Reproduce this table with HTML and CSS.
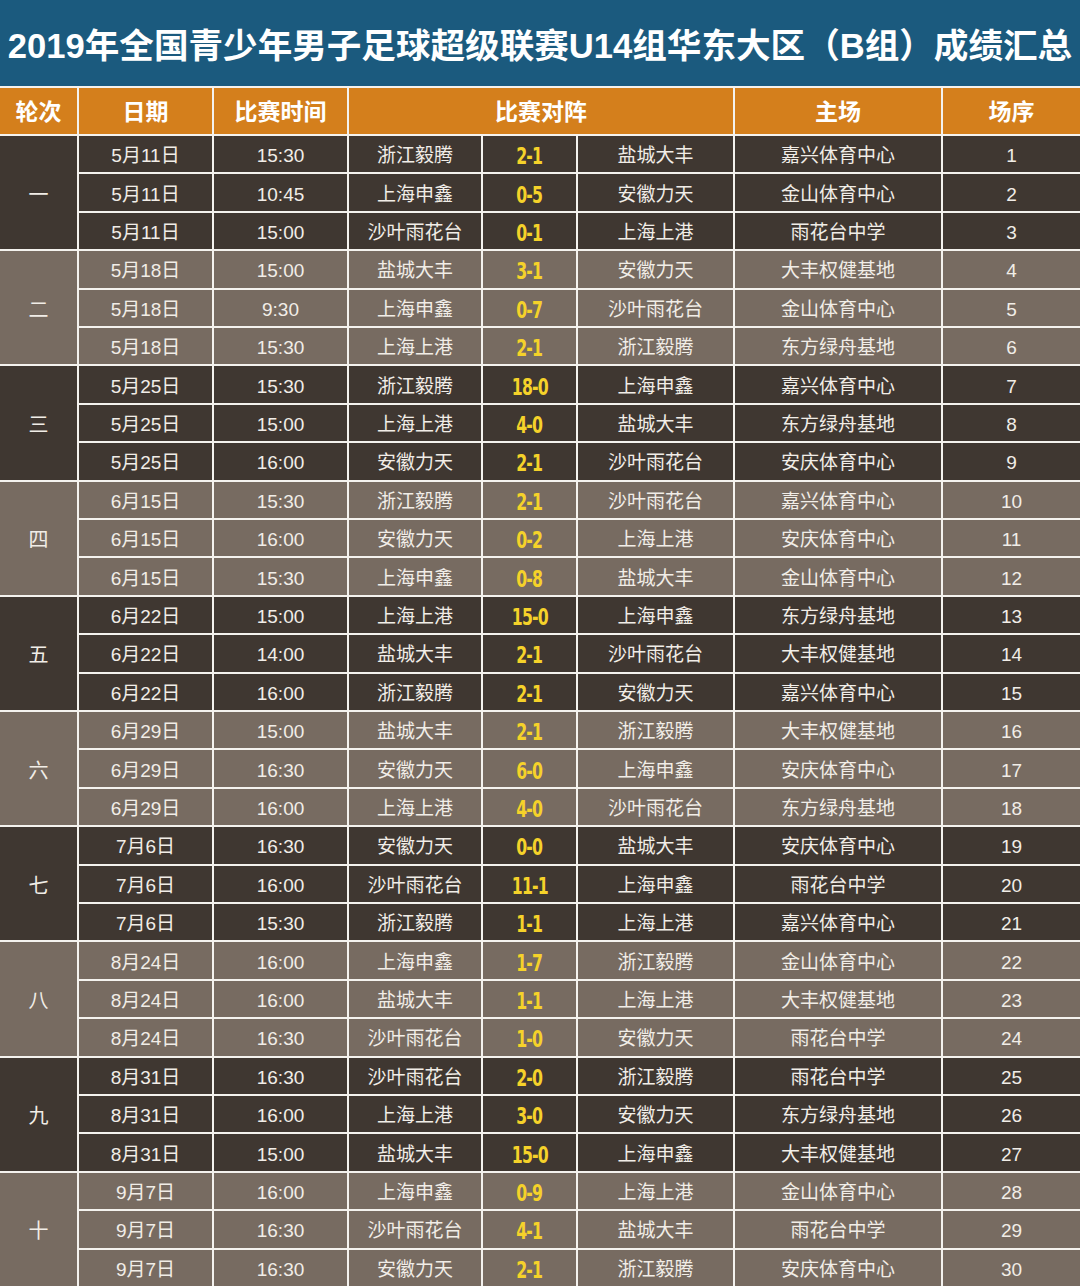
FILE: index.html
```html
<!DOCTYPE html>
<html lang="zh">
<head>
<meta charset="utf-8">
<link rel="stylesheet" href="styles.css">
</head>
<body>
<div class="page">
  <div class="title">2019年全国青少年男子足球超级联赛U14组华东大区（B组）成绩汇总</div>
  <div class="grid">
    <div class="hd">轮次</div>
    <div class="hd">日期</div>
    <div class="hd">比赛时间</div>
    <div class="hd span3">比赛对阵</div>
    <div class="hd">主场</div>
    <div class="hd">场序</div>

    <div class="round dark">
      <div class="rn">一</div>
      <div>5月11日</div><div>15:30</div><div>浙江毅腾</div><div class="sc"><span>2-1</span></div><div>盐城大丰</div><div>嘉兴体育中心</div><div>1</div>
      <div>5月11日</div><div>10:45</div><div>上海申鑫</div><div class="sc"><span>0-5</span></div><div>安徽力天</div><div>金山体育中心</div><div>2</div>
      <div>5月11日</div><div>15:00</div><div>沙叶雨花台</div><div class="sc"><span>0-1</span></div><div>上海上港</div><div>雨花台中学</div><div>3</div>
    </div>
    <div class="round light">
      <div class="rn">二</div>
      <div>5月18日</div><div>15:00</div><div>盐城大丰</div><div class="sc"><span>3-1</span></div><div>安徽力天</div><div>大丰权健基地</div><div>4</div>
      <div>5月18日</div><div>9:30</div><div>上海申鑫</div><div class="sc"><span>0-7</span></div><div>沙叶雨花台</div><div>金山体育中心</div><div>5</div>
      <div>5月18日</div><div>15:30</div><div>上海上港</div><div class="sc"><span>2-1</span></div><div>浙江毅腾</div><div>东方绿舟基地</div><div>6</div>
    </div>
    <div class="round dark">
      <div class="rn">三</div>
      <div>5月25日</div><div>15:30</div><div>浙江毅腾</div><div class="sc"><span>18-0</span></div><div>上海申鑫</div><div>嘉兴体育中心</div><div>7</div>
      <div>5月25日</div><div>15:00</div><div>上海上港</div><div class="sc"><span>4-0</span></div><div>盐城大丰</div><div>东方绿舟基地</div><div>8</div>
      <div>5月25日</div><div>16:00</div><div>安徽力天</div><div class="sc"><span>2-1</span></div><div>沙叶雨花台</div><div>安庆体育中心</div><div>9</div>
    </div>
    <div class="round light">
      <div class="rn">四</div>
      <div>6月15日</div><div>15:30</div><div>浙江毅腾</div><div class="sc"><span>2-1</span></div><div>沙叶雨花台</div><div>嘉兴体育中心</div><div>10</div>
      <div>6月15日</div><div>16:00</div><div>安徽力天</div><div class="sc"><span>0-2</span></div><div>上海上港</div><div>安庆体育中心</div><div>11</div>
      <div>6月15日</div><div>15:30</div><div>上海申鑫</div><div class="sc"><span>0-8</span></div><div>盐城大丰</div><div>金山体育中心</div><div>12</div>
    </div>
    <div class="round dark">
      <div class="rn">五</div>
      <div>6月22日</div><div>15:00</div><div>上海上港</div><div class="sc"><span>15-0</span></div><div>上海申鑫</div><div>东方绿舟基地</div><div>13</div>
      <div>6月22日</div><div>14:00</div><div>盐城大丰</div><div class="sc"><span>2-1</span></div><div>沙叶雨花台</div><div>大丰权健基地</div><div>14</div>
      <div>6月22日</div><div>16:00</div><div>浙江毅腾</div><div class="sc"><span>2-1</span></div><div>安徽力天</div><div>嘉兴体育中心</div><div>15</div>
    </div>
    <div class="round light">
      <div class="rn">六</div>
      <div>6月29日</div><div>15:00</div><div>盐城大丰</div><div class="sc"><span>2-1</span></div><div>浙江毅腾</div><div>大丰权健基地</div><div>16</div>
      <div>6月29日</div><div>16:30</div><div>安徽力天</div><div class="sc"><span>6-0</span></div><div>上海申鑫</div><div>安庆体育中心</div><div>17</div>
      <div>6月29日</div><div>16:00</div><div>上海上港</div><div class="sc"><span>4-0</span></div><div>沙叶雨花台</div><div>东方绿舟基地</div><div>18</div>
    </div>
    <div class="round dark">
      <div class="rn">七</div>
      <div>7月6日</div><div>16:30</div><div>安徽力天</div><div class="sc"><span>0-0</span></div><div>盐城大丰</div><div>安庆体育中心</div><div>19</div>
      <div>7月6日</div><div>16:00</div><div>沙叶雨花台</div><div class="sc"><span>11-1</span></div><div>上海申鑫</div><div>雨花台中学</div><div>20</div>
      <div>7月6日</div><div>15:30</div><div>浙江毅腾</div><div class="sc"><span>1-1</span></div><div>上海上港</div><div>嘉兴体育中心</div><div>21</div>
    </div>
    <div class="round light">
      <div class="rn">八</div>
      <div>8月24日</div><div>16:00</div><div>上海申鑫</div><div class="sc"><span>1-7</span></div><div>浙江毅腾</div><div>金山体育中心</div><div>22</div>
      <div>8月24日</div><div>16:00</div><div>盐城大丰</div><div class="sc"><span>1-1</span></div><div>上海上港</div><div>大丰权健基地</div><div>23</div>
      <div>8月24日</div><div>16:30</div><div>沙叶雨花台</div><div class="sc"><span>1-0</span></div><div>安徽力天</div><div>雨花台中学</div><div>24</div>
    </div>
    <div class="round dark">
      <div class="rn">九</div>
      <div>8月31日</div><div>16:30</div><div>沙叶雨花台</div><div class="sc"><span>2-0</span></div><div>浙江毅腾</div><div>雨花台中学</div><div>25</div>
      <div>8月31日</div><div>16:00</div><div>上海上港</div><div class="sc"><span>3-0</span></div><div>安徽力天</div><div>东方绿舟基地</div><div>26</div>
      <div>8月31日</div><div>15:00</div><div>盐城大丰</div><div class="sc"><span>15-0</span></div><div>上海申鑫</div><div>大丰权健基地</div><div>27</div>
    </div>
    <div class="round light">
      <div class="rn">十</div>
      <div>9月7日</div><div>16:00</div><div>上海申鑫</div><div class="sc"><span>0-9</span></div><div>上海上港</div><div>金山体育中心</div><div>28</div>
      <div>9月7日</div><div>16:30</div><div>沙叶雨花台</div><div class="sc"><span>4-1</span></div><div>盐城大丰</div><div>雨花台中学</div><div>29</div>
      <div>9月7日</div><div>16:30</div><div>安徽力天</div><div class="sc"><span>2-1</span></div><div>浙江毅腾</div><div>安庆体育中心</div><div>30</div>
    </div>
  </div>
</div>
</body>
</html>
```
FILE: styles.css
```css
* { box-sizing: border-box; }
html, body { margin: 0; padding: 0; }
body {
  width: 1080px;
  height: 1286px;
  overflow: hidden;
  background: #ffffff;
  font-family: "Liberation Sans", "Noto Sans CJK SC", sans-serif;
}
.page {
  width: 1080px;
  height: 1286px;
  display: flex;
  flex-direction: column;
}
.title {
  height: 86px;
  background: #1b5a7e;
  color: #ffffff;
  font-weight: bold;
  font-size: 34.6px;
  line-height: 40px;
  display: flex;
  align-items: center;
  justify-content: center;
  white-space: nowrap;
  padding-top: 5px;
}
.grid {
  flex: 1;
  display: grid;
  grid-template-columns: 77px 133px 133px 132px 93px 155px 206px 137px;
  grid-template-rows: 46px repeat(30, 1fr);
  gap: 2px;
  padding-top: 2px;
  background: #f4f2ee;
}
.grid > div:not(.round),
.round > div {
  display: flex;
  align-items: center;
  justify-content: center;
  white-space: nowrap;
  line-height: 24px;
}
.hd {
  background: #d47f1c;
  color: #ffffff;
  font-weight: bold;
  font-size: 23px;
  padding-top: 1px;
}
.span3 { grid-column: span 3; }
.round { display: contents; }
.round > div {
  color: #f1ede7;
  font-size: 19px;
  padding-top: 4px;
}
.round.dark > div { background: #3f3731; }
.round.light > div { background: #776b61; }
.round > .rn {
  grid-row: span 3;
  font-size: 20px;
}
.round > .sc span {
  display: inline-block;
  color: #f5d22a;
  font-family: "DejaVu Sans Condensed", "Liberation Sans", sans-serif;
  font-weight: bold;
  font-size: 23px;
  letter-spacing: -1px;
  transform: scaleX(0.76);
}
```
